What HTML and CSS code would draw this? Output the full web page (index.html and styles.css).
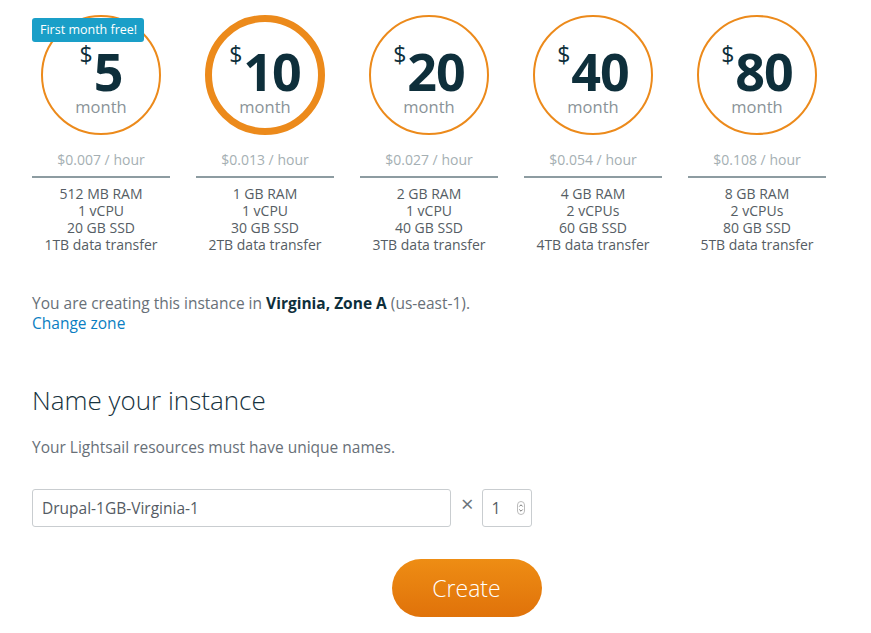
FILE: index.html
```html
<!DOCTYPE html>
<html>
<head>
<meta charset="utf-8">
<link rel="stylesheet" href="styles.css">
</head>
<body>
<div class="page">
  <div class="plans">
    <div class="plan">
      <div class="circle"><div class="price"><span class="cur">$</span><span class="num">5</span></div><div class="per">month</div></div>
      <span class="badge">First month free!</span>
      <div class="hour">$0.007 / hour</div>
      <div class="specs">512 MB RAM<br>1 vCPU<br>20 GB SSD<br>1TB data transfer</div>
    </div>
    <div class="plan">
      <div class="circle selected"><div class="price"><span class="cur">$</span><span class="num">10</span></div><div class="per">month</div></div>
      <div class="hour">$0.013 / hour</div>
      <div class="specs">1 GB RAM<br>1 vCPU<br>30 GB SSD<br>2TB data transfer</div>
    </div>
    <div class="plan">
      <div class="circle"><div class="price"><span class="cur">$</span><span class="num">20</span></div><div class="per">month</div></div>
      <div class="hour">$0.027 / hour</div>
      <div class="specs">2 GB RAM<br>1 vCPU<br>40 GB SSD<br>3TB data transfer</div>
    </div>
    <div class="plan">
      <div class="circle"><div class="price"><span class="cur">$</span><span class="num">40</span></div><div class="per">month</div></div>
      <div class="hour">$0.054 / hour</div>
      <div class="specs">4 GB RAM<br>2 vCPUs<br>60 GB SSD<br>4TB data transfer</div>
    </div>
    <div class="plan">
      <div class="circle"><div class="price"><span class="cur">$</span><span class="num">80</span></div><div class="per">month</div></div>
      <div class="hour">$0.108 / hour</div>
      <div class="specs">8 GB RAM<br>2 vCPUs<br>80 GB SSD<br>5TB data transfer</div>
    </div>
  </div>

  <p class="zone">You are creating this instance in <b>Virginia, Zone A</b> (us-east-1).<br><a class="link" href="#">Change zone</a></p>

  <h2 class="title">Name your instance</h2>
  <p class="hint">Your Lightsail resources must have unique names.</p>

  <div class="namerow">
    <div class="nameinput">Drupal-1GB-Virginia-1</div>
    <span class="times">×</span>
    <div class="count"><span>1</span>
      <svg class="spin" width="8" height="14" viewBox="0 0 8 14"><rect x="0.5" y="0.5" width="7" height="13" rx="3.5" fill="none" stroke="#bbb"/><path d="M2.3 5.5 L4 3.8 L5.7 5.5 M2.3 8.5 L4 10.2 L5.7 8.5" fill="none" stroke="#666" stroke-width="0.9"/></svg>
    </div>
  </div>

  <div class="actions"><button class="create">Create</button></div>
</div>
</body>
</html>
```

FILE: styles.css
```css
* { box-sizing: border-box; }
body {
  margin: 0;
  background: #fff;
  font-family: "Open Sans", "Noto Sans", sans-serif;
  color: #545b64;
}
.page { padding: 15px 0 0 32px; }
.plans { display: flex; gap: 26px; }
.plan {
  width: 138px;
  position: relative;
  display: flex;
  flex-direction: column;
  align-items: center;
}
.circle {
  width: 120px;
  height: 120px;
  border-radius: 50%;
  border: 2px solid #ec8a1b;
  display: flex;
  flex-direction: column;
  align-items: center;
  padding-top: 30px;
}
.circle.selected { border-width: 7px; padding-top: 25px; }
.price { display: flex; align-items: flex-start; color: #0e2f3b; line-height: 1; }
.cur { font-size: 23px; font-weight: 400; margin-top: -4px; margin-right: 1px; }
.num { font-size: 52px; font-weight: 700; letter-spacing: -1px; line-height: 48px; }
.per { font-size: 16.5px; color: #8a9398; line-height: 20px; margin-top: 2px; }
.badge {
  position: absolute;
  left: 0;
  top: 3px;
  background: #1a9fc8;
  color: #fff;
  font-size: 12.5px;
  padding: 3px 7px 3px 8px;
  border-radius: 3px;
  line-height: 18px;
}
.hour {
  margin-top: 15px;
  width: 100%;
  text-align: center;
  font-size: 14px;
  color: #a5afb3;
  line-height: 20px;
  padding-bottom: 6px;
  border-bottom: 2px solid #8d9ca1;
}
.specs {
  margin-top: 7px;
  text-align: center;
  font-size: 14px;
  line-height: 17px;
  color: #555d64;
  white-space: nowrap;
}
.zone {
  margin: 40px 0 0;
  font-size: 15.5px;
  line-height: 20px;
  color: #687078;
}
.zone b { color: #0e2f3b; font-weight: 700; }
.link { color: #0a7ec2; text-decoration: none; }
.title {
  margin: 50px 0 0;
  font-size: 26px;
  font-weight: 300;
  color: #16323e;
  line-height: 34px;
}
.hint {
  margin: 20px 0 0;
  font-size: 15.5px;
  color: #687078;
  line-height: 20px;
}
.namerow { display: flex; align-items: center; margin-top: 32px; }
.nameinput {
  width: 419px;
  height: 38px;
  border: 1px solid #c9cdd0;
  border-radius: 3px;
  padding: 0 9px;
  font-size: 15.5px;
  color: #545b64;
  display: flex;
  align-items: center;
}
.times {
  margin: -10px 8px 0 10px;
  font-size: 22px;
  color: #6b747a;
}
.count {
  width: 50px;
  height: 38px;
  border: 1px solid #c9cdd0;
  border-radius: 3px;
  display: flex;
  align-items: center;
  justify-content: space-between;
  padding: 0 6px 0 9px;
  font-size: 16px;
  color: #545b64;
}
.actions { display: flex; justify-content: center; width: 871px; margin-left: -32px; padding-left: 62px; margin-top: 32px; }
.create {
  width: 150px;
  height: 58px;
  border: none;
  border-radius: 29px;
  background: linear-gradient(#ee8d14, #e0720a);
  color: #fff;
  font-family: "Open Sans", "Noto Sans", sans-serif;
  font-size: 23px;
  font-weight: 300;
}
```
